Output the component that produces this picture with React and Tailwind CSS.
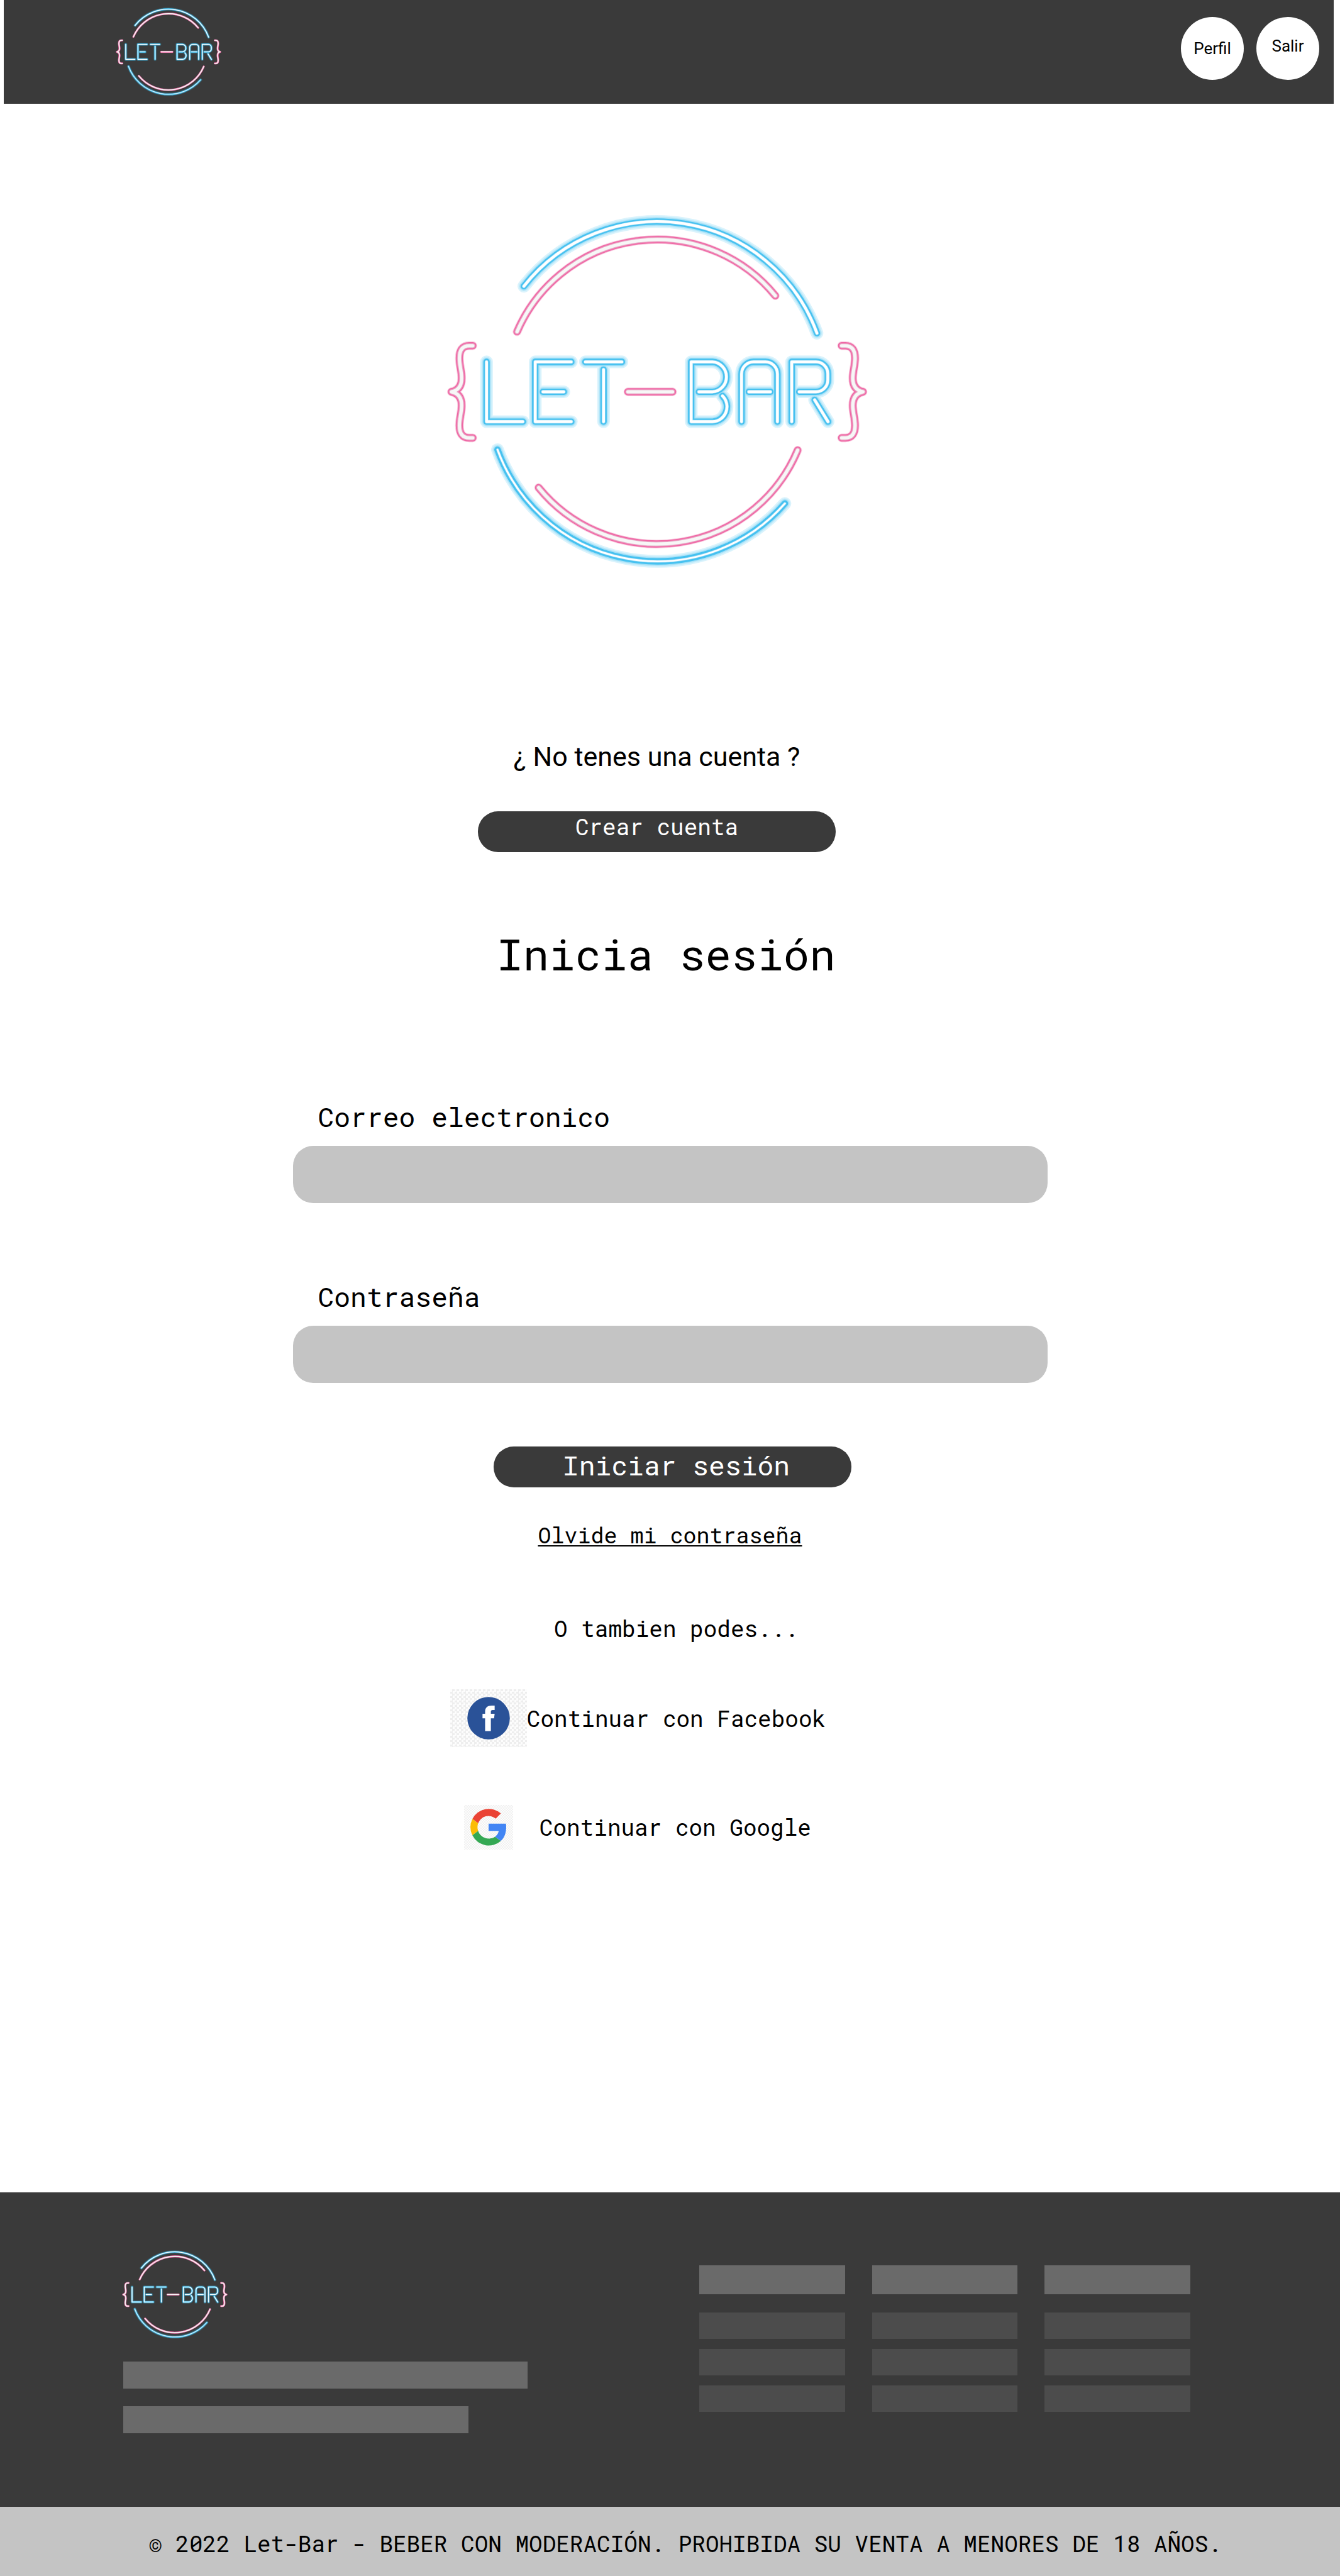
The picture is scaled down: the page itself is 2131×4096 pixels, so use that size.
const ARCS_BLUE =
  "M192.5 190.7 A374.5 374.5 0 0 1 838.1 294.1 " +
  "M110.3 357.3 V489 H190.3 " +
  "M297 357.3 H217.5 V489 H297 M234.5 423.2 H280.5 " +
  "M328 357.3 H408.5 M368 374.3 V489 " +
  "M578 423.2 H608 A32.5 33 0 0 0 608 357.3 H561 V489 H608 A32.5 33 0 0 0 630 432.3 " +
  "M672 489 V384 A26.5 26.7 0 0 1 698.5 357.3 H724.5 A26.5 26.7 0 0 1 751 384 V489 M688 423.2 H735.6 " +
  "M782.5 489 V357.3 H836 A26 26 0 0 1 862 383.3 V397.2 A26 26 0 0 1 836 423.2 H799 M833 441 L862.5 489";
const LOWER_BLUE = "M134.4 550.7 A374.5 374.5 0 0 0 767.5 669.1";
const PINK =
  "M177.5 290.9 A335.9 335.9 0 0 1 746.3 211.6 " +
  "M225 634.3 A335.9 335.9 0 0 0 795.6 551.8 " +
  "M80 321.7 H72 C57 321.7 50.5 332 50.5 349 C50.5 365 55.5 378 55.5 393 C55.5 409 49 420 33 423.2 C49 426.4 55.5 437.4 55.5 453.4 C55.5 468.4 50.5 481.4 50.5 497.4 C50.5 514.4 57 524.7 72 524.7 H80 " +
  "M892.5 321.7 H900.5 C915.5 321.7 922 332 922 349 C922 365 917 378 917 393 C917 409 923.5 420 939.5 423.2 C923.5 426.4 917 437.4 917 453.4 C917 468.4 922 481.4 922 497.4 C922 514.4 915.5 524.7 900.5 524.7 H892.5";
const DASH = "M421.7 423.2 H520";

function Logo({ className }) {
  return (
    <svg
      viewBox="22 34 928 778"
      className={className}
      role="img"
      aria-label="Let-Bar"
      fill="none"
      strokeLinecap="round"
      strokeLinejoin="round"
    >
      <g stroke="#45c1f0">
        <path d={ARCS_BLUE + LOWER_BLUE} strokeWidth="28" strokeOpacity="0.2" />
        <path d={ARCS_BLUE + LOWER_BLUE} strokeWidth="22" strokeOpacity="0.15" />
        <path d={ARCS_BLUE + LOWER_BLUE} strokeWidth="18" strokeOpacity="0.25" />
        <path d={ARCS_BLUE + LOWER_BLUE} strokeWidth="14" />
      </g>
      <path d={ARCS_BLUE} stroke="#8ed6f4" strokeWidth="8" />
      <path d={ARCS_BLUE} stroke="#ffffff" strokeWidth="6" />
      <path d={LOWER_BLUE} stroke="#8ed6f4" strokeWidth="6" />
      <path d={LOWER_BLUE} stroke="#ffffff" strokeWidth="4" />
      <g stroke="#ee66a4">
        <path d={PINK + DASH} strokeWidth="19" strokeOpacity="0.35" />
        <path d={PINK + DASH} strokeWidth="16" />
      </g>
      <path d={PINK + DASH} stroke="#f08bb8" strokeWidth="12" />
      <path d={PINK + DASH} stroke="#e3b9cd" strokeWidth="9" />
      <path d={PINK + DASH} stroke="#f7f7f7" strokeWidth="7" />
    </svg>
  );
}

function FacebookIcon() {
  return (
    <svg viewBox="150 101 282 282" className="size-[68px]" aria-hidden="true">
      <circle cx="291" cy="242" r="140" fill="#2a5298" />
      <path
        fill="#ffffff"
        d="M331 159 H312 C285 159 268 172 268 198 V213 H251 V243 H268 V327 H306 V243 H327 L331 213 H306 V200 C306 193 309 188 318 188 H331 Z"
      />
    </svg>
  );
}

function GoogleIcon() {
  return (
    <svg viewBox="42 36 324 294" className="h-[71px] w-[78px]" aria-hidden="true">
      <path fill="#ea4335" d="M97 128 A121 122 0 0 1 285 92 L251 126 A73 74 0 0 0 135 157 Z" />
      <path fill="#fbbc05" d="M97 128 A122 122 0 0 0 97 236 L135 207 A74 74 0 0 1 135 157 Z" />
      <path fill="#34a853" d="M97 236 A121 122 0 0 0 285 273 L247 245 A74 74 0 0 1 135 207 Z" />
      <path fill="#4285f4" d="M204 159 H319 C324 200 316 245 285 273 L247 245 C260 236 268 223 271 207 H204 Z" />
    </svg>
  );
}

function Field({ id, label, type }) {
  return (
    <div className="flex flex-col gap-[18px]">
      <label htmlFor={id} className="pl-10 text-[43px] leading-14">
        {label}
      </label>
      <input
        id={id}
        name={id}
        type={type}
        className="h-[91px] w-full rounded-[32px] bg-[#c4c4c4] px-10 text-[36px] outline-none"
      />
    </div>
  );
}

function LinkColumn() {
  return (
    <div className="flex flex-col gap-4">
      <div className="mb-[13px] h-[46px] bg-[#6a6a6a]" />
      <div className="h-[42px] bg-[#4c4c4c]" />
      <div className="h-[42px] bg-[#4c4c4c]" />
      <div className="h-[42px] bg-[#4c4c4c]" />
    </div>
  );
}

export default function App() {
  return (
    <div className="flex min-h-screen flex-col bg-white font-['Roboto_Mono','DejaVu_Sans_Mono',monospace] text-black">
      <header className="mr-[10px] ml-[6px] flex h-[165px] items-start justify-between bg-[#3a3a3a] pr-[23px] pl-[178px]">
        <Logo className="mt-3 w-[168px]" />
        <nav className="mt-[27px] flex gap-5 font-['Roboto',sans-serif] text-[26px]">
          <button type="button" className="flex size-[100px] items-center justify-center rounded-full bg-white">
            Perfil
          </button>
          <button type="button" className="flex size-[100px] items-center justify-center rounded-full bg-white pb-2">
            Salir
          </button>
        </nav>
      </header>

      <main className="flex flex-1 flex-col items-center pt-[177px]">
        <section className="flex flex-col items-center pr-[42px]">
          <Logo className="w-[670px]" />
          <p className="mt-[271px] font-['Roboto',sans-serif] text-[43px] leading-14">¿ No tenes una cuenta ?</p>
          <button
            type="button"
            className="mt-[59px] flex h-[65px] w-[569px] items-center justify-center rounded-[32px] bg-[#3a3a3a] pb-4 text-[36px] text-white"
          >
            Crear cuenta
          </button>
        </section>

        <h1 className="mt-[116px] pr-3 text-[69px] leading-[92px]">Inicia sesión</h1>

        <form
          className="mt-[185px] flex w-full max-w-[1200px] flex-col"
          onSubmit={(event) => event.preventDefault()}
        >
          <Field id="correo" label="Correo electronico" type="email" />
          <div className="mt-[121px]">
            <Field id="contrasena" label="Contraseña" type="password" />
          </div>
          <div className="mt-[101px] flex justify-center pl-2">
            <button
              type="submit"
              className="flex h-[65px] w-[569px] items-center justify-center rounded-[32px] bg-[#3a3a3a] pb-1 pl-3 text-[43px] text-white"
            >
              Iniciar sesión
            </button>
          </div>
        </form>

        <a href="#recuperar" className="mt-[51px] text-[35px] leading-12 underline decoration-2 underline-offset-[3px]">
          Olvide mi contraseña
        </a>
        <p className="mt-[101px] pl-5 text-[36px] leading-12">O tambien podes...</p>

        <div className="mt-[73px] flex flex-col items-start gap-[92px] pr-[102px] text-[36px] leading-12">
          <button type="button" className="flex items-center">
            <span className="flex h-[92px] w-[122px] items-center justify-center bg-[repeating-conic-gradient(#eeeeee_0_25%,#fdfdfd_0_50%)] bg-[length:7px_7px]">
              <FacebookIcon />
            </span>
            Continuar con Facebook
          </button>
          <button type="button" className="flex items-center gap-5">
            <span className="flex w-[122px] justify-center">
              <span className="bg-[repeating-conic-gradient(#f1f1f1_0_25%,#fdfdfd_0_50%)] bg-[length:4px_4px]">
                <GoogleIcon />
              </span>
            </span>
            Continuar con Google
          </button>
        </div>
      </main>

      <footer>
        <div className="flex items-start justify-between bg-[#3a3a3a] pr-[238px] pb-[117px] pl-[196px]">
          <div className="pt-[92px]">
            <Logo className="-ml-0.5 w-[168px]" />
            <div className="mt-9 h-[43px] w-[643px] bg-[#6a6a6a]" />
            <div className="mt-7 h-[43px] w-[549px] bg-[#6a6a6a]" />
          </div>
          <div className="grid w-[781px] grid-cols-3 gap-[43px] pt-[116px]">
            <LinkColumn />
            <LinkColumn />
            <LinkColumn />
          </div>
        </div>
        <p className="bg-[#c4c4c4] pt-[34px] pb-7 pl-12 text-center text-[36px] leading-12">
          © 2022 Let-Bar - BEBER CON MODERACIÓN. PROHIBIDA SU VENTA A MENORES DE 18 AÑOS.
        </p>
      </footer>
    </div>
  );
}
